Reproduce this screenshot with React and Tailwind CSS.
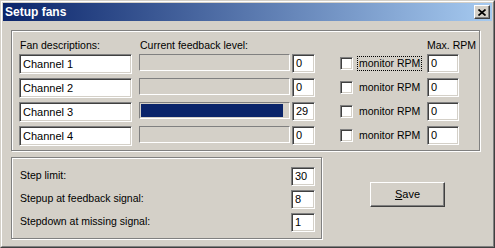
import React from 'react';

const font = { fontFamily: '"Liberation Sans", Arial, sans-serif' };

const channels = [
  { name: 'Channel 1', level: 0, rpm: 0, focus: true },
  { name: 'Channel 2', level: 0, rpm: 0 },
  { name: 'Channel 3', level: 29, rpm: 0 },
  { name: 'Channel 4', level: 0, rpm: 0 },
];

const settings = [
  { label: 'Step limit:', value: '30' },
  { label: 'Stepup at feedback signal:', value: '8' },
  { label: 'Stepdown at missing signal:', value: '1' },
];

// sunken win2k edit box
function Edit({ value, className = '' }) {
  return (
    <div
      className={`flex items-center bg-white border border-t-[#808080] border-l-[#808080] border-r-white border-b-white shadow-[inset_1px_1px_0_#404040,inset_-1px_-1px_0_#D4D0C8] pl-[3px] text-[11px] leading-none text-black ${className}`}
    >
      {value}
    </div>
  );
}

function Progress({ value, max = 30 }) {
  return (
    <div className="w-[151px] h-[17px] ml-[7px] p-px border border-t-[#808080] border-l-[#808080] border-r-white border-b-white">
      {value > 0 && (
        <div className="h-full bg-[#0A246A]" style={{ width: `${(value / max) * 100}%` }} />
      )}
    </div>
  );
}

function Etched({ className = '', children }) {
  return (
    <div className={`border border-[#808080] shadow-[inset_1px_1px_0_#fff,1px_1px_0_#fff] ${className}`}>
      {children}
    </div>
  );
}

export default function App() {
  return (
    <div
      className="w-[495px] h-[248px] flex bg-[#D4D0C8] border border-t-[#D4D0C8] border-l-[#D4D0C8] border-r-[#404040] border-b-[#404040] text-[10.5px] text-black"
      style={font}
    >
      <div className="flex-1 flex flex-col p-px border border-t-white border-l-white border-r-[#808080] border-b-[#808080]">
        {/* Title bar */}
        <div className="h-[18px] flex items-center justify-between bg-[linear-gradient(to_right,#0A246A,#A6CAF0)]">
          <span className="pl-[2px] text-white font-bold text-[12px] leading-none">Setup fans</span>
          <button className="w-[16px] h-[14px] mr-[2px] flex items-center justify-center bg-[#D4D0C8] border border-t-white border-l-white border-r-[#404040] border-b-[#404040] shadow-[inset_-1px_-1px_0_#808080]">
            <svg width="8" height="7" viewBox="0 0 8 7">
              <path d="M0.5 0.5 L7.5 6.5 M7.5 0.5 L0.5 6.5" stroke="#000" strokeWidth="1.7" />
            </svg>
          </button>
        </div>

        {/* Body */}
        <div className="flex-1 pl-[8px] pt-[9px]">
          <Etched className="w-[469px] pl-[7px] pb-[4px]">
            <div className="flex items-end h-[23px] pb-[2px] leading-[13px]">
              <span className="w-[120px] pl-px">Fan descriptions:</span>
              <span className="w-[288px] pl-px">Current feedback level:</span>
              <span>Max. RPM</span>
            </div>
            <div className="flex flex-col gap-[4px]">
              {channels.map((c) => (
                <div key={c.name} className="flex items-start h-[20px]">
                  <Edit value={c.name} className="w-[113px] h-[20px]" />
                  <Progress value={c.level} />
                  <Edit value={String(c.level)} className="w-[23px] h-[19px] ml-[2px]" />
                  <div className="w-[13px] h-[13px] ml-[25px] mt-[3px] bg-white border border-t-[#808080] border-l-[#808080] border-r-white border-b-white shadow-[inset_1px_1px_0_#404040,inset_-1px_-1px_0_#D4D0C8]" />
                  <div className="w-[70px] ml-[4px] mt-[2px] flex">
                    <span
                      className={`px-px leading-[13px] border border-dotted ${c.focus ? 'border-black' : 'border-transparent'}`}
                    >
                      monitor RPM
                    </span>
                  </div>
                  <Edit value={String(c.rpm)} className="w-[32px] h-[19px]" />
                </div>
              ))}
            </div>
          </Etched>

          <div className="flex items-start mt-[6px]">
            <Etched className="w-[311px] h-[82px] pt-[9px] pl-[8px] pr-[6px]">
              <div className="flex flex-col gap-[4px]">
                {settings.map((s) => (
                  <div key={s.label} className="flex items-center justify-between h-[19px]">
                    <span className="leading-[13px] -mt-[3px]">{s.label}</span>
                    <Edit value={s.value} className="w-[24px] h-[19px]" />
                  </div>
                ))}
              </div>
            </Etched>
            <button className="w-[75px] h-[25px] ml-[48px] mt-[25px] flex items-center justify-center bg-[#D4D0C8] border border-t-white border-l-white border-r-[#404040] border-b-[#404040] shadow-[inset_-1px_-1px_0_#808080] text-[11px] leading-none">
              <span>
                <span className="underline">S</span>ave
              </span>
            </button>
          </div>
        </div>
      </div>
    </div>
  );
}
